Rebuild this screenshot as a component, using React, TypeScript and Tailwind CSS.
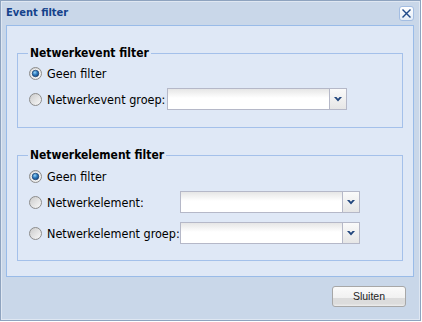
import React from "react";

const FONT = { fontFamily: '"DejaVu Sans Condensed", Tahoma, "DejaVu Sans", sans-serif' };

function Radio({ checked }: { checked?: boolean }) {
  return (
    <svg width="13" height="13" viewBox="0 0 13 13" className="shrink-0 ml-[1px]">
      <defs>
        <linearGradient id="rgOff" x1="0" y1="0" x2="1" y2="1">
          <stop offset="0" stopColor="#c9c9c9" />
          <stop offset="1" stopColor="#fbfbfb" />
        </linearGradient>
        <radialGradient id="rgDot" cx="0.4" cy="0.35" r="0.75">
          <stop offset="0" stopColor="#9ad6f7" />
          <stop offset="0.45" stopColor="#2f7cc0" />
          <stop offset="1" stopColor="#123c70" />
        </radialGradient>
      </defs>
      <circle cx="6.5" cy="6.5" r="6" fill="url(#rgOff)" stroke="#8c8c8c" strokeWidth="1" />
      {checked && (
        <>
          <circle cx="6.5" cy="6.5" r="4.6" fill="#f2f2f2" />
          <circle cx="6.5" cy="6.5" r="3.3" fill="url(#rgDot)" stroke="#1a3d6b" strokeWidth="0.7" />
        </>
      )}
    </svg>
  );
}

function Combo() {
  return (
    <div className="flex h-[22px] w-[180px] shrink-0">
      <div className="h-full w-[162px] border border-r-0 border-[#b5b8c8] bg-[linear-gradient(to_bottom,#e6e6e6,#ffffff_45%)]" />
      <div className="flex h-full w-[18px] items-center justify-center border border-[#b5b8c8] bg-[linear-gradient(to_bottom,#fafafa,#e6e6e6)]">
        <svg width="8" height="5" viewBox="0 0 8 5">
          <polygon points="0,0 2.4,0 4,1.7 5.6,0 8,0 4,4.4" fill="#22467d" />
        </svg>
      </div>
    </div>
  );
}

function RadioLabel({ checked, label, width }: { checked?: boolean; label: string; width?: string }) {
  return (
    <div className={"flex items-center shrink-0 " + (width ?? "")}>
      <Radio checked={checked} />
      <span className="ml-[5px] whitespace-nowrap text-[12.5px] leading-[15px] text-black">{label}</span>
    </div>
  );
}

export default function App() {
  return (
    <div className="h-[322px] w-[422px] bg-white" style={FONT}>
      <div className="flex h-[321px] w-[421px] flex-col border border-[#8ea3bf] bg-[#c9d7e9] pl-[5px] pr-[6px] shadow-[inset_0_0_0_1px_#dfe7f2]">
        {/* title bar */}
        <div className="flex h-[24px] shrink-0 items-center justify-between">
          <span className="text-[11px] font-bold leading-[24px] text-[#15428b]">Event filter</span>
          <div className="flex h-[15px] w-[15px] items-center justify-center rounded-[3px] border border-[#a3bde2] bg-[linear-gradient(to_bottom,#ffffff,#e3ecf8)]">
            <svg width="9" height="9" viewBox="0 0 9 9">
              <path d="M1 1 L8 8 M8 1 L1 8" stroke="#1f4a8a" strokeWidth="1.4" strokeLinecap="square" />
            </svg>
          </div>
        </div>

        {/* body */}
        <div className="flex h-[252px] shrink-0 flex-col border border-[#99bbe8] bg-[#dfe8f6] px-[10px] pt-[20px]">
          <fieldset className="border border-[#a4c0ea] px-[10px] pb-[17px]">
            <legend className="px-[2px] text-[12px] font-bold leading-[14px] text-black">Netwerkevent filter</legend>
            <div className="mt-[4px] flex h-[18px] items-center">
              <RadioLabel checked label="Geen filter" />
            </div>
            <div className="mt-[6px] flex h-[22px] items-center">
              <RadioLabel label="Netwerkevent groep:" width="w-[139px]" />
              <Combo />
            </div>
          </fieldset>

          <fieldset className="mt-[20px] border border-[#a4c0ea] px-[10px] pb-[16px]">
            <legend className="px-[2px] text-[12px] font-bold leading-[14px] text-black">Netwerkelement filter</legend>
            <div className="mt-[5px] flex h-[18px] items-center">
              <RadioLabel checked label="Geen filter" />
            </div>
            <div className="mt-[6px] flex h-[22px] items-center">
              <RadioLabel label="Netwerkelement:" width="w-[152px]" />
              <Combo />
            </div>
            <div className="mt-[9px] flex h-[22px] items-center">
              <RadioLabel label="Netwerkelement groep:" width="w-[152px]" />
              <Combo />
            </div>
          </fieldset>
        </div>

        {/* footer */}
        <div className="flex justify-end pt-[9px]">
          <button
            className="mr-[8px] flex h-[21px] w-[74px] items-center justify-center rounded-[3px] border border-[#a7a7a7] bg-[linear-gradient(to_bottom,#fafafa_0%,#f1f1f1_58%,#dcdcdc_59%,#dcdcdc_88%,#eeeeee_100%)] text-[10.5px] text-[#222]"
            style={{ fontFamily: '"Liberation Sans", Arial, sans-serif' }}
          >
            Sluiten
          </button>
        </div>
      </div>
    </div>
  );
}
